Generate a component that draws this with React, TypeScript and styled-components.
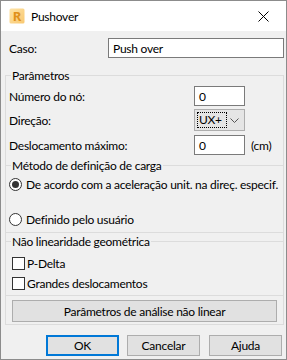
import React, { FC } from 'react';
import styled, { createGlobalStyle } from 'styled-components';

const GlobalStyle = createGlobalStyle`
  html, body {
    margin: 0;
    padding: 0;
    background: #ffffff;
  }
  * {
    box-sizing: border-box;
  }
`;

const Window = styled.div`
  width: 287px;
  height: 360px;
  border: 1px solid #8c8c8c;
  background: #f0f0f0;
  display: flex;
  flex-direction: column;
  font-family: Lato, "Noto Sans", sans-serif;
  font-size: 12px;
  letter-spacing: -0.25px;
  color: #000;
`;

const TitleBar = styled.div`
  height: 30px;
  background: #ffffff;
  display: flex;
  align-items: center;
  padding-left: 8px;
  flex-shrink: 0;
`;

const TitleText = styled.span`
  margin-left: 6px;
  font-size: 12px;
`;

const CloseButton = styled.div`
  margin-left: auto;
  width: 46px;
  height: 30px;
  display: flex;
  align-items: center;
  justify-content: center;
`;

const Body = styled.div`
  flex: 1;
  padding: 7px 2px 0 4px;
  display: flex;
  flex-direction: column;
`;

const CasoRow = styled.div`
  display: flex;
  align-items: center;
  height: 20px;
`;

const Label = styled.span<{ $indent?: number }>`
  flex: 1;
  padding-left: ${p => p.$indent ?? 4}px;
  white-space: nowrap;
`;

const TextBox = styled.div<{ $width: number }>`
  width: ${p => p.$width}px;
  height: 20px;
  background: #ffffff;
  border: 1px solid #7a7a7a;
  display: flex;
  align-items: center;
  padding-left: 4px;
`;

const Group = styled.div`
  margin-top: 17px;
  border: 1px solid #dcdcdc;
  border-top: none;
  display: flex;
  flex-direction: column;
  padding-bottom: 2px;
`;

const Legend = styled.div<{ $top?: number }>`
  height: 17px;
  margin: ${p => p.$top ?? 0}px -1px 0;
  display: flex;
  align-items: center;
  &::before {
    content: "";
    width: 6px;
    height: 1px;
    background: #dcdcdc;
  }
  &::after {
    content: "";
    flex: 1;
    height: 1px;
    background: #dcdcdc;
  }
  span {
    padding: 0 1px;
    white-space: nowrap;
  }
`;

const Divider = styled.div<{ $top: number }>`
  height: 1px;
  margin: ${p => p.$top}px -1px 0;
  background: #dcdcdc;
`;

const FieldRow = styled.div<{ $top: number; $height?: number }>`
  display: flex;
  align-items: center;
  height: ${p => p.$height ?? 20}px;
  margin-top: ${p => p.$top}px;
`;

const FieldSlot = styled.div`
  width: 89px;
  display: flex;
  align-items: center;
  gap: 6px;
`;

const Combo = styled.div`
  width: 51px;
  height: 22px;
  background: #e5e5e5;
  border: 1px solid #adadad;
  display: flex;
  align-items: center;
  padding: 2px;
`;

const ComboValue = styled.span`
  border: 1px dotted #000;
  height: 16px;
  line-height: 14px;
  padding: 0 4px 0 1px;
`;

const ComboArrow = styled.span`
  margin-left: auto;
  margin-right: 3px;
  display: flex;
`;

const OptionRow = styled.div<{ $top: number }>`
  display: flex;
  align-items: center;
  height: 16px;
  margin-top: ${p => p.$top}px;
  padding-left: 2px;
  white-space: nowrap;
`;

const Radio = styled.span<{ $checked?: boolean }>`
  width: 13px;
  height: 13px;
  border-radius: 50%;
  border: 1px solid #333;
  background: #fff;
  display: flex;
  align-items: center;
  justify-content: center;
  margin: 0 4px 0 1px;
  &::after {
    content: "";
    display: ${p => (p.$checked ? 'block' : 'none')};
    width: 7px;
    height: 7px;
    border-radius: 50%;
    background: #333;
  }
`;

const Check = styled.span`
  width: 13px;
  height: 13px;
  border: 1px solid #333;
  background: #fff;
  margin: 0 2px 0 4px;
`;

const Button = styled.div<{ $primary?: boolean }>`
  height: 21px;
  background: #e1e1e1;
  border: ${p => (p.$primary ? '2px solid #0078d7' : '1px solid #adadad')};
  display: flex;
  align-items: center;
  justify-content: center;
`;

const WideButton = styled(Button)`
  height: 22px;
  margin: 4px 6px 0;
`;

const Footer = styled.div`
  display: flex;
  justify-content: flex-end;
  gap: 8px;
  margin-top: 10px;
  padding-right: 2px;
  ${Button} {
    width: 73px;
  }
  ${Button}:last-child {
    margin-left: 1px;
  }
`;

const AppIcon: FC = () => (
  <svg width="16" height="16" viewBox="0 0 16 16">
    <defs>
      <linearGradient id="ri" x1="0" y1="0" x2="1" y2="1">
        <stop offset="0" stopColor="#fde3a7" />
        <stop offset="1" stopColor="#f9c870" />
      </linearGradient>
    </defs>
    <rect x="0.5" y="0.5" width="15" height="15" rx="1.5" fill="url(#ri)" />
    <text x="8" y="13" textAnchor="middle" fontFamily="Noto Sans, sans-serif" fontWeight="700" fontSize="13" fill="#e0901a">R</text>
  </svg>
);

const App: FC = () => (
  <>
    <GlobalStyle />
    <Window>
      <TitleBar>
        <AppIcon />
        <TitleText>Pushover</TitleText>
        <CloseButton>
          <svg width="11" height="11" viewBox="0 0 11 11">
            <path d="M0.5 0.5 L10.5 10.5 M10.5 0.5 L0.5 10.5" stroke="#000" strokeWidth="1" />
          </svg>
        </CloseButton>
      </TitleBar>
      <Body>
        <CasoRow>
          <Label>Caso:</Label>
          <TextBox $width={176}>Push over</TextBox>
        </CasoRow>
        <Group>
          <Legend $top={-8}><span>Parâmetros</span></Legend>
          <FieldRow $top={2}>
            <Label $indent={3}>Número do nó:</Label>
            <FieldSlot><TextBox $width={51}>0</TextBox></FieldSlot>
          </FieldRow>
          <FieldRow $top={3} $height={22}>
            <Label $indent={3}>Direção:</Label>
            <FieldSlot>
              <Combo>
                <ComboValue>UX+</ComboValue>
                <ComboArrow>
                  <svg width="9" height="5" viewBox="0 0 9 5">
                    <path d="M0.5 0.5 L4.5 4.5 L8.5 0.5" fill="none" stroke="#555" strokeWidth="1" />
                  </svg>
                </ComboArrow>
              </Combo>
            </FieldSlot>
          </FieldRow>
          <FieldRow $top={4}>
            <Label $indent={3}>Deslocamento máximo:</Label>
            <FieldSlot><TextBox $width={51}>0</TextBox><span>(cm)</span></FieldSlot>
          </FieldRow>
          <Legend $top={2}><span>Método de definição de carga</span></Legend>
          <OptionRow $top={2}>
            <Radio $checked />De acordo com a aceleração unit. na direç. especif.
          </OptionRow>
          <OptionRow $top={19}>
            <Radio />Definido pelo usuário
          </OptionRow>
          <Divider $top={5} />
          <Legend><span>Não linearidade geométrica</span></Legend>
          <OptionRow $top={5}>
            <Check />P-Delta
          </OptionRow>
          <OptionRow $top={4}>
            <Check />Grandes deslocamentos
          </OptionRow>
          <Divider $top={4} />
          <WideButton>Parâmetros de análise não linear</WideButton>
        </Group>
        <Footer>
          <Button $primary>OK</Button>
          <Button>Cancelar</Button>
          <Button>Ajuda</Button>
        </Footer>
      </Body>
    </Window>
  </>
);

export default App;
